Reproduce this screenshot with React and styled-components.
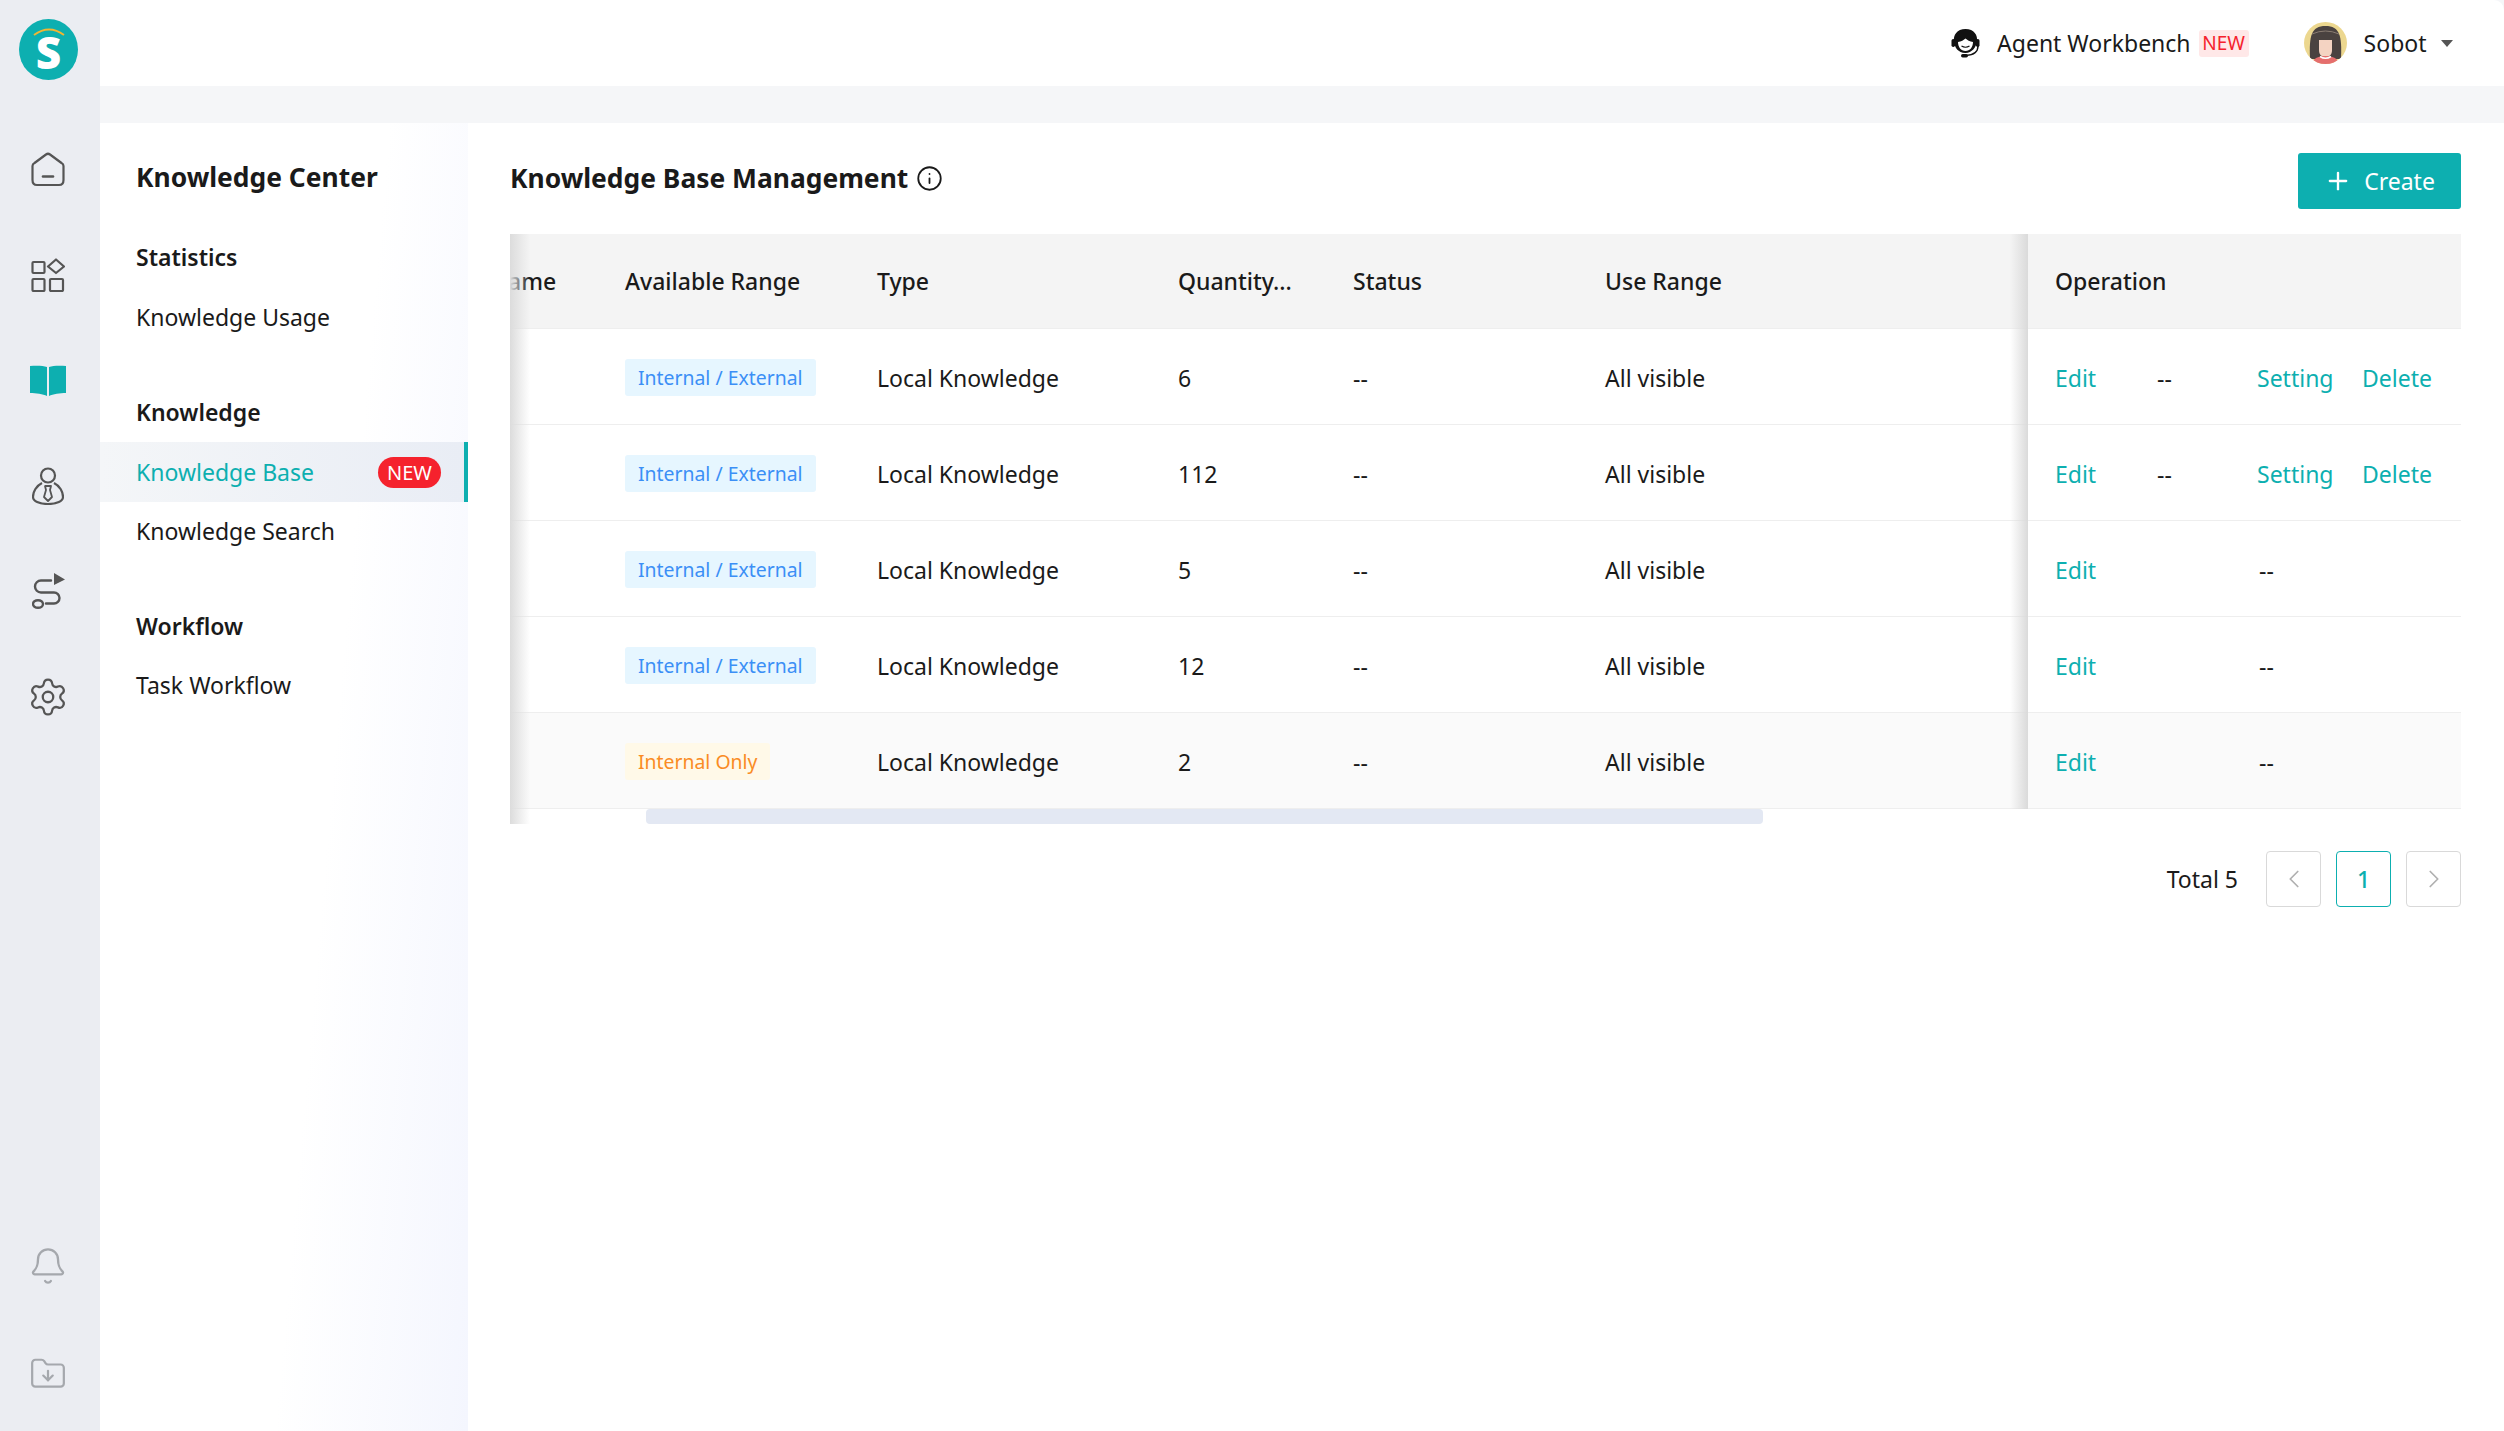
import styled, { createGlobalStyle } from "styled-components";
import { Bell, ChevronLeft, ChevronRight, FolderDown, Info, Plus, Settings } from "lucide-react";

const TEAL = "#0dafb0";

const GlobalStyle = createGlobalStyle`
  html, body {
    margin: 0;
    padding: 0;
    background: #f5f6f8;
  }
  body {
    font-family: "Noto Sans", "Open Sans", sans-serif;
    font-size: 23px;
    color: #1a1a1a;
  }
`;

const Page = styled.div`
  display: flex;
  height: 1431px;
  overflow: hidden;
`;

const Rail = styled.nav`
  width: 100px;
  box-sizing: border-box;
  flex: none;
  display: flex;
  flex-direction: column;
  align-items: center;
  background: #ebedf2;
  padding: 19px 4px 0 0;
`;

const LogoWrap = styled.div`
  height: 61px;
  margin-bottom: 37px;
`;

const RailItem = styled.div`
  height: ${(p) => (p.$bottom ? 108 : 105.4)}px;
  display: flex;
  align-items: center;
  justify-content: center;
  color: ${(p) => (p.$bottom ? "#a5a8ad" : "#555555")};
`;

const RailSpacer = styled.div`
  flex: 1;
`;

const RailFoot = styled.div`
  margin-bottom: 3px;
`;

const Body = styled.div`
  flex: 1;
  min-width: 0;
  display: flex;
  flex-direction: column;
`;

const TopBar = styled.header`
  height: 86px;
  flex: none;
  display: flex;
  align-items: center;
  justify-content: flex-end;
  background: #ffffff;
  padding-right: 51px;
  border-top-right-radius: 10px;
`;

const Workbench = styled.div`
  display: flex;
  align-items: center;
  margin-right: 55px;
`;

const WorkbenchLabel = styled.span`
  margin-left: 17px;
  margin-right: 8px;
`;

const NewTag = styled.span`
  width: 50px;
  height: 27px;
  display: flex;
  align-items: center;
  justify-content: center;
  border-radius: 3px;
  background: #ffe8e8;
  color: #f5222d;
  font-family: "Liberation Sans Narrow", "Noto Sans", sans-serif;
  font-size: 19px;
`;

const UserBox = styled.div`
  display: flex;
  align-items: center;
`;

const UserName = styled.span`
  margin-left: 17px;
  margin-right: 14.5px;
`;

const Caret = styled.span`
  width: 0;
  height: 0;
  border-left: 6.5px solid transparent;
  border-right: 6.5px solid transparent;
  border-top: 7px solid #555555;
`;

const Workspace = styled.div`
  flex: 1;
  min-height: 0;
  display: flex;
  margin-top: 37px;
`;

const SideNav = styled.aside`
  width: 368px;
  flex: none;
  padding-top: 32px;
  background: linear-gradient(95deg, #ffffff 60%, #f4f6fe 100%);
`;

const SideTitle = styled.h2`
  margin: 0 0 29px 36px;
  font-size: 26.4px;
  font-weight: 700;
  line-height: 44px;
`;

const SideGroup = styled.div`
  margin-bottom: 35px;
`;

const SideHeading = styled.div`
  height: ${(p) => p.$h || 59}px;
  box-sizing: border-box;
  display: flex;
  align-items: center;
  padding: 0 0 2px 36px;
  font-weight: 600;
`;

const SideItem = styled.div`
  height: 60px;
  box-sizing: border-box;
  display: flex;
  align-items: center;
  justify-content: space-between;
  padding: 0 23px ${(p) => (p.$active ? 0 : 2)}px 36px;
  color: ${(p) => (p.$active ? TEAL : "#1a1a1a")};
  background: ${(p) => (p.$active ? "linear-gradient(90deg, #f4f6f8, #e9edf5)" : "transparent")};
  border-right: 4px solid ${(p) => (p.$active ? TEAL : "transparent")};
`;

const NewPill = styled.span`
  width: 63px;
  height: 31px;
  display: flex;
  align-items: center;
  justify-content: center;
  border-radius: 16px;
  background: #f5222d;
  color: #ffffff;
  font-size: 20px;
`;

const Main = styled.main`
  flex: 1;
  min-width: 0;
  background: #ffffff;
  padding: 30px 43px 0 42px;
`;

const TitleRow = styled.div`
  height: 56px;
  display: flex;
  align-items: center;
  justify-content: space-between;
  margin-bottom: 25px;
`;

const TitleGroup = styled.div`
  display: flex;
  align-items: center;
  gap: 8px;
  margin-top: -6px;
`;

const PageTitle = styled.h1`
  margin: 0;
  font-size: 26.4px;
  font-weight: 700;
`;

const CreateButton = styled.button`
  width: 163px;
  height: 56px;
  display: flex;
  align-items: center;
  justify-content: center;
  gap: 12px;
  border: 0;
  border-radius: 3px;
  background: ${TEAL};
  color: #ffffff;
  font: inherit;
`;

const TableFrame = styled.div`
  position: relative;
  overflow: hidden;

  &::before {
    content: "";
    position: absolute;
    z-index: 3;
    left: 0;
    top: 0;
    bottom: 0;
    width: 20px;
    background: linear-gradient(90deg, #dcdcdc, rgba(220, 220, 220, 0));
  }
`;

const Grid = styled.table`
  width: 2298px;
  margin-left: -175px;
  border-collapse: separate;
  border-spacing: 0;
  table-layout: fixed;
`;

const OperationEdge = `
  position: relative;

  &::before {
    content: "";
    position: absolute;
    right: 100%;
    top: 0;
    bottom: -1px;
    width: 18px;
    background: linear-gradient(90deg, rgba(216, 216, 216, 0), #dadada);
  }
`;

const HeadCell = styled.th`
  height: 95px;
  padding: 0 0 0 27px;
  box-sizing: border-box;
  background: #f4f4f4;
  border-bottom: 1px solid #eeeeee;
  text-align: left;
  font-weight: 500;
  white-space: nowrap;
  ${(p) => p.$fixed && OperationEdge}
`;

const Cell = styled.td`
  height: 96px;
  padding: 2px 0 0 27px;
  box-sizing: border-box;
  background: ${(p) => (p.$hover ? "#fafafa" : "#ffffff")};
  border-bottom: 1px solid #eeeeee;
  white-space: nowrap;
  ${(p) => p.$fixed && OperationEdge}
`;

const RangeTag = styled.span`
  display: inline-flex;
  align-items: center;
  height: 37px;
  padding: 0 13px;
  border-radius: 3px;
  font-size: 19.4px;
  background: ${(p) => (p.$internal ? "#fff9e8" : "#e6f6ff")};
  color: ${(p) => (p.$internal ? "#fa8c24" : "#3b8ff6")};
`;

const Actions = styled.div`
  display: grid;
  grid-template-columns: 102px 100px 105px auto;
  align-items: center;
`;

const ActionLink = styled.a`
  color: ${TEAL};
`;

const Dash = styled.span`
  grid-column: ${(p) => p.$col};
  padding-left: ${(p) => (p.$col === 3 ? 2 : 0)}px;
`;

const ScrollTrack = styled.div`
  height: 15px;
`;

const ScrollThumb = styled.div`
  width: 1117px;
  height: 15px;
  margin-left: 136px;
  border-radius: 4px;
  background: #e3e8f3;
`;

const Pager = styled.div`
  display: flex;
  justify-content: flex-end;
  align-items: center;
  gap: 15px;
  margin-top: 27px;
`;

const PagerTotal = styled.span`
  margin-right: 13px;
`;

const PagerButton = styled.div`
  width: 55px;
  height: 56px;
  box-sizing: border-box;
  display: flex;
  align-items: center;
  justify-content: center;
  border: 1.5px solid ${(p) => (p.$active ? TEAL : "#d9d9d9")};
  border-radius: 4px;
  color: ${(p) => (p.$active ? TEAL : "#b0b0b0")};
  font-weight: ${(p) => (p.$active ? 500 : 400)};
`;

const LogoIcon = () => (
  <svg width="59" height="61" viewBox="0 0 59 61">
    <ellipse cx="29.5" cy="30.5" rx="29.5" ry="30.5" fill={TEAL} />
    <path d="M15 16 Q30 5 45 16" fill="none" stroke="#f2b632" strokeWidth="2" />
    <text
      x="29.5"
      y="50"
      textAnchor="middle"
      fontFamily="'Noto Sans', sans-serif"
      fontWeight="900"
      fontSize="44"
      fill="#ffffff"
    >
      S
    </text>
  </svg>
);

const HomeIcon = () => (
  <svg width="34" height="35" viewBox="0 0 34 35" fill="none" stroke="currentColor" strokeWidth="2.2" strokeLinejoin="round" strokeLinecap="round">
    <path d="M1.5 14 Q1.5 12 3.5 11 L15 2.5 Q17 1 19 2.5 L30.5 11 Q32.5 12 32.5 14 V28 Q32.5 33 28 33 H6 Q1.5 33 1.5 28 Z" />
    <path d="M12 24.5 H22" strokeWidth="2.6" />
  </svg>
);

const AppsIcon = () => (
  <svg width="34" height="34" viewBox="0 0 34 34" fill="none" stroke="currentColor" strokeWidth="2.2" strokeLinejoin="round">
    <rect x="1.5" y="4" width="12" height="11" rx="1" />
    <rect x="1.5" y="21" width="12" height="12" rx="1" />
    <rect x="19" y="21" width="13" height="12" rx="1" />
    <path d="M25 1.5 L33 8.5 L25 15 L17 8.5 Z" />
  </svg>
);

const BookIcon = () => (
  <svg width="36" height="31" viewBox="0 0 36 31" fill={TEAL}>
    <path d="M0 1 C6 0.5 13 0.5 17 2 V31 C13 29 6 28 0 28 Z" />
    <path d="M36 1 C30 0.5 23 0.5 19 2 V31 C23 29 30 28 36 28 Z" />
  </svg>
);

const AgentIcon = () => (
  <svg width="32" height="38" viewBox="0 0 32 38" fill="none" stroke="currentColor" strokeWidth="2.2" strokeLinejoin="round">
    <circle cx="16" cy="8.5" r="7" />
    <path d="M10 16 C4 19 1 25 1 30 C1 34 7 37 16 37 C25 37 31 34 31 30 C31 25 28 19 22 16" />
    <path d="M13 19 H19 L18 23 L20 30 L16 34 L12 30 L14 23 Z" strokeWidth="1.8" />
  </svg>
);

const RouteIcon = () => (
  <svg width="33" height="36" viewBox="0 0 33 36" fill="none" stroke="currentColor" strokeWidth="2.4" strokeLinecap="round">
    <path d="M22 0 L33 6.5 L22 12 Z" fill="currentColor" stroke="none" />
    <path d="M19 7.5 H9 a6 6 0 0 0 0 12 H22 a5.5 5.5 0 0 1 0 11 H14" />
    <ellipse cx="6" cy="31" rx="5" ry="3.8" />
  </svg>
);

const HeadsetIcon = () => (
  <svg width="29" height="29" viewBox="0 0 29 29">
    <path d="M14.5 0 C6 0 2 6 3 13 C3.5 18 7 24 14.5 24 C21 24 25 18 26 13 C27 6 23 0 14.5 0 Z" fill="#111111" />
    <path d="M7 13 C10 12.5 13 11 14.5 9.5 C16 11 19 12.5 22 13 C22 18 19 22 14.5 22 C10 22 7 18 7 13 Z" fill="#ffffff" />
    <path d="M10.5 17 Q14.5 19.5 18.5 17" fill="none" stroke="#111111" strokeWidth="1.1" />
    <rect x="0.5" y="10" width="3.5" height="8" rx="1.7" fill="#111111" />
    <rect x="25" y="10" width="3.5" height="8" rx="1.7" fill="#111111" />
    <path d="M27 17 C27 23 23 26 15 26.5" fill="none" stroke="#111111" strokeWidth="1.4" />
    <rect x="10" y="25" width="7" height="3.5" rx="1.7" fill="#111111" />
  </svg>
);

const AvatarIcon = () => (
  <svg width="43" height="42" viewBox="0 0 43 42">
    <defs>
      <clipPath id="avatar-clip">
        <ellipse cx="21.5" cy="21" rx="21.5" ry="21" />
      </clipPath>
    </defs>
    <g clipPath="url(#avatar-clip)">
      <rect width="43" height="42" fill="#ecd78f" />
      <path d="M6 37 C5 14 7 4 21.5 4 C36 4 38 14 37 37 Z" fill="#4a4240" />
      <path d="M15 18 H28 V28 C28 33 25 35 21.5 35 C18 35 15 33 15 28 Z" fill="#f4d3c2" />
      <path d="M8 12 Q21.5 6 35 12" fill="none" stroke="#8a7c72" strokeWidth="1" />
      <path d="M8 42 C9 36 15 34 21.5 34 C28 34 34 36 35 42 Z" fill="#e56e6e" />
      <path d="M16 34.5 Q21.5 38 27 34.5" fill="none" stroke="#ffffff" strokeWidth="1.6" />
    </g>
  </svg>
);

const rows = [
  { range: "Internal / External", quantity: "6", full: true },
  { range: "Internal / External", quantity: "112", full: true },
  { range: "Internal / External", quantity: "5" },
  { range: "Internal / External", quantity: "12" },
  { range: "Internal Only", quantity: "2", internal: true, hover: true },
];

const App = () => {
  return (
    <>
      <GlobalStyle />
      <Page>
        <Rail>
          <LogoWrap>
            <LogoIcon />
          </LogoWrap>
          <RailItem><HomeIcon /></RailItem>
          <RailItem><AppsIcon /></RailItem>
          <RailItem><BookIcon /></RailItem>
          <RailItem><AgentIcon /></RailItem>
          <RailItem><RouteIcon /></RailItem>
          <RailItem><Settings size={42} strokeWidth={1.3} /></RailItem>
          <RailSpacer />
          <RailFoot>
            <RailItem $bottom><Bell size={40} strokeWidth={1.4} /></RailItem>
            <RailItem $bottom><FolderDown size={38} strokeWidth={1.4} /></RailItem>
          </RailFoot>
        </Rail>
        <Body>
          <TopBar>
            <Workbench>
              <HeadsetIcon />
              <WorkbenchLabel>Agent Workbench</WorkbenchLabel>
              <NewTag>NEW</NewTag>
            </Workbench>
            <UserBox>
              <AvatarIcon />
              <UserName>Sobot</UserName>
              <Caret />
            </UserBox>
          </TopBar>
          <Workspace>
            <SideNav>
              <SideTitle>Knowledge Center</SideTitle>
              <SideGroup>
                <SideHeading $h={60}>Statistics</SideHeading>
                <SideItem>Knowledge Usage</SideItem>
              </SideGroup>
              <SideGroup>
                <SideHeading>Knowledge</SideHeading>
                <SideItem $active>
                  Knowledge Base
                  <NewPill>NEW</NewPill>
                </SideItem>
                <SideItem>Knowledge Search</SideItem>
              </SideGroup>
              <SideGroup>
                <SideHeading>Workflow</SideHeading>
                <SideItem>Task Workflow</SideItem>
              </SideGroup>
            </SideNav>
            <Main>
              <TitleRow>
                <TitleGroup>
                  <PageTitle>Knowledge Base Management</PageTitle>
                  <Info size={27} strokeWidth={1.6} />
                </TitleGroup>
                <CreateButton>
                  <Plus size={28} strokeWidth={2} />
                  Create
                </CreateButton>
              </TitleRow>
              <TableFrame>
                <Grid>
                  <colgroup>
                    <col width="263" />
                    <col width="252" />
                    <col width="301" />
                    <col width="175" />
                    <col width="252" />
                    <col width="450" />
                    <col width="605" />
                  </colgroup>
                  <thead>
                    <tr>
                      <HeadCell>Knowledge Name</HeadCell>
                      <HeadCell>Available Range</HeadCell>
                      <HeadCell>Type</HeadCell>
                      <HeadCell>Quantity...</HeadCell>
                      <HeadCell>Status</HeadCell>
                      <HeadCell>Use Range</HeadCell>
                      <HeadCell $fixed>Operation</HeadCell>
                    </tr>
                  </thead>
                  <tbody>
                    {rows.map((row, index) => (
                      <tr key={index}>
                        <Cell $hover={row.hover} />
                        <Cell $hover={row.hover}>
                          <RangeTag $internal={row.internal}>{row.range}</RangeTag>
                        </Cell>
                        <Cell $hover={row.hover}>Local Knowledge</Cell>
                        <Cell $hover={row.hover}>{row.quantity}</Cell>
                        <Cell $hover={row.hover}>--</Cell>
                        <Cell $hover={row.hover}>All visible</Cell>
                        <Cell $hover={row.hover} $fixed>
                          <Actions>
                            <ActionLink>Edit</ActionLink>
                            {row.full ? (
                              <>
                                <Dash $col={2}>--</Dash>
                                <ActionLink>Setting</ActionLink>
                                <ActionLink>Delete</ActionLink>
                              </>
                            ) : (
                              <Dash $col={3}>--</Dash>
                            )}
                          </Actions>
                        </Cell>
                      </tr>
                    ))}
                  </tbody>
                </Grid>
                <ScrollTrack>
                  <ScrollThumb />
                </ScrollTrack>
              </TableFrame>
              <Pager>
                <PagerTotal>Total 5</PagerTotal>
                <PagerButton><ChevronLeft size={30} strokeWidth={1.4} /></PagerButton>
                <PagerButton $active>1</PagerButton>
                <PagerButton><ChevronRight size={30} strokeWidth={1.4} /></PagerButton>
              </Pager>
            </Main>
          </Workspace>
        </Body>
      </Page>
    </>
  );
};

export default App;
